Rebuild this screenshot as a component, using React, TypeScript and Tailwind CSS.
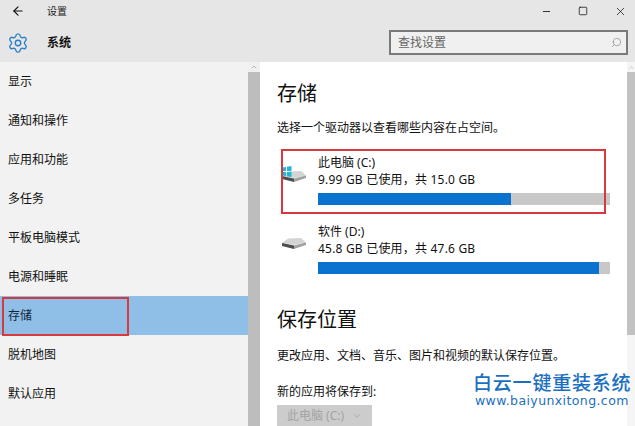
import React from 'react';
import { ArrowLeft, Minus, Square, X, Search, Settings, ChevronUp, ChevronDown } from 'lucide-react';

const navItems = ['显示', '通知和操作', '应用和功能', '多任务', '平板电脑模式', '电源和睡眠', '存储', '脱机地图', '默认应用'];

function DriveIcon({ windows }: { windows?: boolean }) {
  return (
    <svg width="26" height="18" viewBox="0 0 26 18" className="shrink-0">
      <path d="M1 11 L7 6.5 L20 6 L25 10.5 L13 13 Z" fill="#d4d4d4" />
      <path d="M1 11 L13 13.5 L13 17 L1 14 Z" fill="#4c4f52" />
      <path d="M13 13.5 L25 10.5 L25 13 L13 17 Z" fill="#a2a2a2" />
      {windows && (
        <g fill="#22b5dc">
          <path d="M1 2.6 L5 2 L5 6 L1 6 Z" />
          <path d="M6 1.8 L10.5 1 L10.5 6 L6 6 Z" />
          <path d="M1 7 L5 7 L5 11 L1 10.4 Z" />
          <path d="M6 7 L10.5 7 L10.5 12 L6 11.2 Z" />
        </g>
      )}
    </svg>
  );
}

function Drive({ name, usage, percent, windows }: { name: string; usage: string; percent: number; windows?: boolean }) {
  return (
    <div className="flex">
      <div className={`w-[41px] pl-[4px] ${windows ? 'pt-[11px]' : 'pt-[9px]'}`}>
        <DriveIcon windows={windows} />
      </div>
      <div className="w-[292px]">
        <div className="text-[12px] leading-[17px] text-[#111]">{name}</div>
        <div className="text-[12px] leading-[17px] tracking-[0.2px] text-[#111]">{usage}</div>
        <div className="mt-[5px] h-[12px] bg-[#c8c8c8]">
          <div className="h-full bg-[#0a72cf]" style={{ width: `${percent}%` }} />
        </div>
      </div>
    </div>
  );
}

export default function App() {
  return (
    <div
      className="relative flex h-[426px] w-[635px] flex-col overflow-hidden bg-white"
      style={{ fontFamily: '"Noto Sans", "Noto Sans CJK SC", sans-serif' }}
    >
      {/* Title bar + header */}
      <div className="h-[62px] shrink-0 bg-[#e6e6e6]">
        <div className="flex h-[22px] items-center">
          <ArrowLeft className="ml-[11px] h-[14px] w-[14px] text-[#111]" strokeWidth={2} />
          <span className="ml-[22px] text-[10px] text-[#222]">设置</span>
          <div className="ml-auto flex items-center">
            <Minus className="mr-[26px] h-[11px] w-[11px] text-[#222]" strokeWidth={2} />
            <Square className="mr-[26px] h-[10px] w-[10px] text-[#222]" strokeWidth={2} />
            <X className="mr-[8px] h-[13px] w-[13px] text-[#222]" strokeWidth={1.5} />
          </div>
        </div>
        <div className="flex h-[40px] items-start">
          <Settings className="ml-[7px] mt-[10px] h-[22px] w-[22px] text-[#2a7fc8]" strokeWidth={1.5} />
          <span className="ml-[18px] mt-[12px] text-[12px] font-bold leading-[18px] text-[#111]">系统</span>
          <div className="ml-auto mr-[7px] mt-[8px] flex h-[25px] w-[239px] items-center justify-between border-2 border-[#7a7a7a] bg-[#f0f0f0] pl-[7px] pr-[4px]">
            <span className="text-[12px] text-[#666]">查找设置</span>
            <Search className="h-[11px] w-[11px] -scale-x-100 text-[#888]" strokeWidth={1.5} />
          </div>
        </div>
      </div>

      <div className="flex min-h-0 flex-1">
        {/* Sidebar */}
        <div className="w-[248px] shrink-0 bg-[#f2f2f2]">
          {navItems.map((item) => (
            <div
              key={item}
              className={`flex h-[39px] items-center pl-[8px] text-[12px] ${
                item === '存储' ? 'bg-[#8fbfe6] text-[#10263a]' : 'text-[#111]'
              }`}
            >
              {item}
            </div>
          ))}
        </div>
        <div className="flex w-[12px] shrink-0 flex-col bg-[#f0f0f0]">
          <div className="flex h-[10px] items-center justify-center">
            <ChevronUp className="h-[8px] w-[8px] text-[#999]" />
          </div>
          <div className="flex-1 bg-[#bdbdbd]" />
        </div>

        {/* Content */}
        <div className="flex-1 pl-[17px]">
          <h1 className="mt-[17px] text-[20px] leading-[30px] text-[#111]">存储</h1>
          <p className="mt-[10px] text-[12px] leading-[18px] text-[#111]">选择一个驱动器以查看哪些内容在占空间。</p>
          <div className="mt-[17px] flex flex-col gap-[18px]">
            <Drive name="此电脑 (C:)" usage="9.99 GB 已使用，共 15.0 GB" percent={66} windows />
            <Drive name="软件 (D:)" usage="45.8 GB 已使用，共 47.6 GB" percent={96.2} />
          </div>
          <h2 className="mt-[31px] text-[20px] leading-[30px] text-[#111]">保存位置</h2>
          <p className="mt-[12px] text-[12px] leading-[18px] text-[#111]">更改应用、文档、音乐、图片和视频的默认保存位置。</p>
          <p className="mt-[18px] text-[12px] leading-[18px] text-[#111]">新的应用将保存到:</p>
          <div className="mt-[4px] flex h-[22px] w-[95px] items-center justify-between bg-[#cccccc] px-[10px] text-[12px] text-[#a3a3a3]">
            <span>此电脑 (C:)</span>
            <ChevronDown className="h-[10px] w-[10px]" />
          </div>
        </div>

        <div className="flex w-[8px] shrink-0 flex-col bg-[#f5f5f5]">
          <div className="flex h-[10px] items-center justify-center">
            <ChevronUp className="h-[7px] w-[7px] text-[#aaa]" />
          </div>
          <div className="h-[263px] bg-[#c2c2c2]" />
        </div>
      </div>

      {/* Red annotation boxes */}
      <div className="absolute left-[281px] top-[149px] h-[65px] w-[325px] border-2 border-[#d9383c]" />
      <div className="absolute left-[2px] top-[297px] h-[39px] w-[127px] border-2 border-[#d9383c]" />

      {/* Watermark */}
      <div className="absolute left-[473px] top-[373px] text-[#1a6fc0]">
        <div className="text-[19px] leading-[20px] tracking-[0.8px]" style={{ fontWeight: 500 }}>白云一键重装系统</div>
        <div className="ml-[2px] text-[12.5px] leading-[15px] tracking-[0.4px]" style={{ fontFamily: '"DejaVu Sans", sans-serif' }}>www.baiyunxitong.com</div>
      </div>
    </div>
  );
}
